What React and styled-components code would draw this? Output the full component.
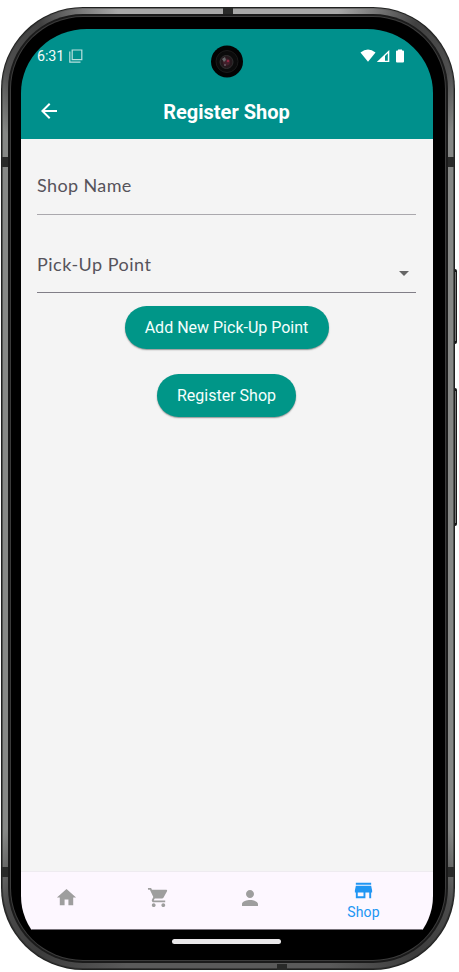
import React from "react";
import styled, { createGlobalStyle } from "styled-components";

const Global = createGlobalStyle`
  * { box-sizing: border-box; }
  body { margin: 0; background: #fff; font-family: Roboto, sans-serif; overflow: hidden; }
  svg { display: block; flex: none; }
`;

const Stage = styled.main`
  position: relative;
  width: 459px;
  height: 972px;
  padding: 7px 4px 2px 1px;
  overflow: hidden;
`;

const Edge = styled.div`
  position: relative;
  width: 454px;
  height: 963px;
  padding: 1px;
  border-radius: 82px;
  background: #202120;
`;

const Rail = styled.div`
  height: 100%;
  padding: 1px;
  border-radius: 81px;
  background: conic-gradient(#6b6b6b 17deg, #333 24deg, #444 28deg, #505250 31deg,
    #505250 147deg, #333 152deg, #303030 160deg, #3c3c3c 180deg, #303030 200deg,
    #333 208deg, #505250 213deg, #505250 329deg, #444 333deg, #333 337deg, #6b6b6b 343deg);
`;

const RailShine = styled.div`
  height: 100%;
  padding: 5px;
  border-radius: 80px;
  background: conic-gradient(#a8a8a8 13deg, #707070 18deg, #404040 22deg, #505050 28deg, #868886 32deg,
    #868886 147deg, #4b4b4b 152deg, #3c3c3c 158deg, #5a5a5a 168deg, #5a5a5a 192deg, #3c3c3c 202deg,
    #4b4b4b 208deg, #868886 213deg, #868886 328deg, #505050 332deg, #404040 338deg, #707070 342deg, #a8a8a8 347deg);
`;

const Lip = styled.div`
  height: 100%;
  padding: 2px;
  border-radius: 75px;
  background: #1b1b1b;
`;

const Hairline = styled.div`
  height: 100%;
  padding: 1px;
  border-radius: 73px;
  background: #3c3c3c;
`;

const Bezel = styled.div`
  height: 100%;
  padding: 12px 11px 5px 10px;
  border-radius: 72px;
  background: #000;
`;

const Screen = styled.div`
  display: flex;
  flex-direction: column;
  height: 927px;
  width: 412px;
  border-radius: 66px 66px 60px 60px / 64px 64px 60px 60px;
  overflow: hidden;
`;

const Header = styled.header`
  height: 110px;
  flex: none;
  background: #00908c;
  color: #fff;
`;

const StatusBar = styled.div`
  display: flex;
  align-items: center;
  height: 54px;
  padding: 0 28px 1px 16px;
  color: #f2fbfa;
`;

const Clock = styled.span`
  font-size: 14.3px;
  line-height: 20px;
  letter-spacing: -0.1px;
  margin-right: 5px;
`;

const Signals = styled.div`
  display: flex;
  align-items: center;
  margin-left: auto;
`;

const TitleBar = styled.div`
  display: grid;
  grid-template-columns: 24px 1fr 24px;
  align-items: center;
  height: 56px;
  padding: 0 17px 0 16px;
`;

const Title = styled.h1`
  margin: 0;
  padding-top: 1px;
  text-align: center;
  font-size: 20px;
  font-weight: 700;
  line-height: 28px;
  letter-spacing: 0;
`;

const Form = styled.section`
  display: flex;
  flex-direction: column;
  align-items: center;
  flex: 1;
  padding: 16px 17px 0 16px;
  background: #f4f4f4;
`;

const Field = styled.label`
  display: flex;
  align-items: center;
  justify-content: space-between;
  width: 379px;
  height: ${(p) => p.$height}px;
  padding: ${(p) => p.$top}px 6px ${(p) => p.$bottom || 0}px 0;
  margin-bottom: ${(p) => p.$gap}px;
  border-bottom: ${(p) => p.$line};
  color: #56535b;
  font-family: Lato, sans-serif;
  font-size: 18px;
  letter-spacing: ${(p) => p.$tracking}px;
`;

const DropdownArrow = styled.span`
  align-self: flex-end;
  padding-bottom: 13px;
`;

const PillButton = styled.button`
  width: ${(p) => p.$width}px;
  height: 43px;
  margin-bottom: 25px;
  padding: 0;
  border: 0;
  border-radius: 22px;
  background: #009688;
  box-shadow: 0 1px 1.5px rgba(0, 0, 0, 0.4);
  color: #f4fffd;
  font: 400 16px/43px Roboto, sans-serif;
  white-space: nowrap;
`;

const BottomNav = styled.nav`
  display: grid;
  grid-template-columns: 91px 92px 91px 137px;
  height: 59px;
  flex: none;
  border-top: 1px solid #eeebf0;
  border-bottom: 1px solid #77727a;
  background: #fdf7ff;
`;

const NavItem = styled.div`
  display: flex;
  flex-direction: column;
  align-items: center;
  padding-top: ${(p) => (p.$active ? 7 : 14)}px;
  color: ${(p) => (p.$active ? "#2196f3" : "#9e9e9e")};
  font-size: 14px;
  line-height: 20px;
  letter-spacing: 0.2px;
`;

const GestureArea = styled.div`
  display: flex;
  justify-content: center;
  height: 26px;
  flex: none;
  padding: 9px 1px 0 0;
  background: #000;
`;

const GestureBar = styled.div`
  width: 109px;
  height: 5px;
  border-radius: 3px;
  background: #e9e7e9;
`;

const Camera = styled.div`
  position: absolute;
  left: 211px;
  top: 45px;
`;

const Antenna = styled.i`
  position: absolute;
  left: ${(p) => p.$x}px;
  top: ${(p) => p.$y}px;
  width: ${(p) => (p.$flat ? 10 : 6)}px;
  height: ${(p) => (p.$flat ? 6 : 10)}px;
  background: #292a29;
`;

const SideKey = styled.i`
  position: absolute;
  left: 454px;
  top: ${(p) => p.$y}px;
  width: 3px;
  height: ${(p) => p.$height}px;
  border: 1px solid #181818;
  border-width: 3px 1px;
  border-radius: 0 2px 2px 0;
  background: #777;
`;

const iconPaths = {
  back: "M20 11H7.83l5.59-5.59L12 4l-8 8 8 8 1.41-1.41L7.83 13H20v-2z",
  home: "M10 20v-6h4v6h5v-8h3L12 3 2 12h3v8z",
  cart: "M7 18c-1.1 0-1.99.9-1.99 2S5.9 22 7 22s2-.9 2-2-.9-2-2-2zM1 2v2h2l3.6 7.59-1.35 2.45c-.16.28-.25.61-.25.96 0 1.1.9 2 2 2h12v-2H7.42c-.14 0-.25-.11-.25-.25l.03-.12.9-1.63h7.45c.75 0 1.41-.41 1.75-1.03l3.58-6.49c.08-.14.12-.31.12-.48 0-.55-.45-1-1-1H5.21l-.94-2H1zm16 16c-1.1 0-1.99.9-1.99 2s.89 2 1.99 2 2-.9 2-2-.9-2-2-2z",
  person: "M12 12c2.21 0 4-1.79 4-4s-1.79-4-4-4-4 1.79-4 4 1.79 4 4 4zm0 2c-2.67 0-8 1.34-8 4v2h16v-2c0-2.66-5.33-4-8-4z",
  shop: "M20 4H4v2h16V4zm1 10v-2l-1-5H4l-1 5v2h1v6h10v-6h4v6h2v-6h1zm-9 4H6v-4h6v4z",
};

function Icon({ name, size }) {
  return (
    <svg width={size} height={size} viewBox="0 0 24 24" fill="currentColor" aria-hidden="true">
      <path d={iconPaths[name]} />
    </svg>
  );
}

function StatusIcons() {
  return (
    <Signals>
      <svg width="45" height="14" viewBox="0 0 45 14" fill="#fff">
        <path d="M.5 3.5Q8-2.3 15.5 3.5L8 12.8z" />
        <path d="M29.3 1v12H16.8z" />
        <path d="M25 7 27.8 4.2V11.7H25z" fill="#00908c" />
        <path d="M38 .5h4v1h1q1 0 1 1v10q0 1-1 1h-6q-1 0-1-1v-10q0-1 1-1h1z" />
      </svg>
    </Signals>
  );
}

export default function App() {
  return (
    <>
      <Global />
      <Stage>
        <SideKey $y={269} $height={75} />
        <SideKey $y={388} $height={138} />
        <Edge>
          <Rail><RailShine><Lip><Hairline><Bezel>
            <Screen>
              <Header>
                <StatusBar>
                  <Clock>6:31</Clock>
                  <svg width="14" height="14" viewBox="0 0 14 14" fill="none" stroke="#b9e0de" strokeWidth="1.2">
                    <path d="M3.2 1h9.6v9.6H3.2zM.8 2.5v10.7h10.7" />
                  </svg>
                  <StatusIcons />
                </StatusBar>
                <TitleBar>
                  <Icon name="back" size={24} />
                  <Title>Register Shop</Title>
                </TitleBar>
              </Header>
              <Form>
                <Field $height={60} $top={1} $gap={23} $tracking={0.38} $line="1px solid #aaa8ad">Shop Name</Field>
                <Field $height={55} $top={0} $bottom={2} $gap={13} $tracking={0.5} $line="1px solid #817e87">
                  Pick-Up Point
                  <DropdownArrow>
                    <svg width="12" height="6" viewBox="0 0 12 6"><path d="M1 0h10L6 5z" fill="#666" /></svg>
                  </DropdownArrow>
                </Field>
                <PillButton $width={204}>Add New Pick-Up Point</PillButton>
                <PillButton $width={139}>Register Shop</PillButton>
              </Form>
              <BottomNav>
                <NavItem><Icon name="home" size={23} /></NavItem>
                <NavItem><Icon name="cart" size={23} /></NavItem>
                <NavItem><Icon name="person" size={24} /></NavItem>
                <NavItem $active><Icon name="shop" size={23} />Shop</NavItem>
              </BottomNav>
              <GestureArea><GestureBar /></GestureArea>
            </Screen>
          </Bezel></Hairline></Lip></RailShine></Rail>
        </Edge>
        <Antenna $flat $x={223} $y={8} />
        <Antenna $flat $x={277} $y={964} />
        <Antenna $x={2} $y={157} />
        <Antenna $x={448} $y={157} />
        <Antenna $x={2} $y={867} />
        <Antenna $x={448} $y={867} />
        <Camera>
          <svg width="32" height="33" viewBox="0 0 32 33">
            <circle cx="16" cy="16.5" r="16" fill="#030303" />
            <circle cx="16" cy="16.5" r="11" fill="#0b0b0b" stroke="#1a1a1a" />
            <circle cx="15.5" cy="17" r="6.5" fill="#25191d" stroke="#303030" />
            <circle cx="15.5" cy="17" r="3.5" fill="#42202b" />
            <path d="M11 14l3-2 1 3-2 2z" fill="#66686a" />
            <circle cx="17" cy="16" r="1.3" fill="#8e2541" />
            <circle cx="14" cy="20" r="1" fill="#665a62" />
          </svg>
        </Camera>
      </Stage>
    </>
  );
}
